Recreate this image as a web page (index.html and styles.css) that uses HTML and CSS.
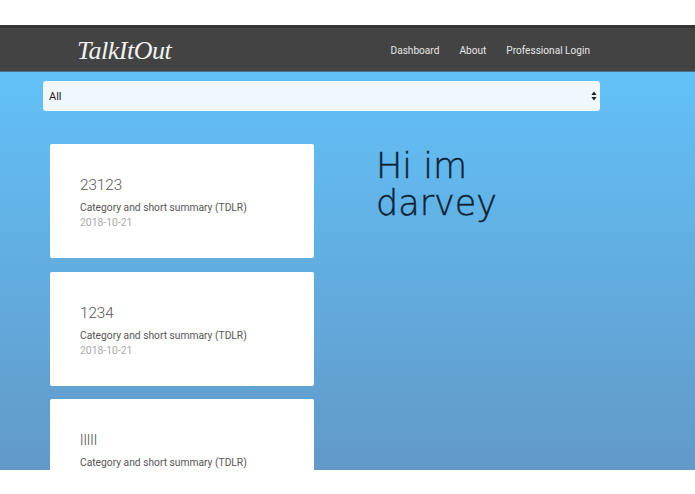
FILE: index.html
```html
<!DOCTYPE html>
<html lang="en">
<head>
<meta charset="utf-8">
<title>TalkItOut</title>
<link rel="stylesheet" href="styles.css">
</head>
<body>
<div class="app">
  <header class="nav">
    <a class="brand">TalkItOut</a>
    <nav class="links">
      <a>Dashboard</a>
      <a>About</a>
      <a>Professional Login</a>
    </nav>
  </header>
  <main class="main">
    <div class="select">
      <span>All</span>
      <svg class="arrows" width="6" height="10" viewBox="0 0 6 10"><path d="M3 0.5 5.6 4H0.4zM3 9.5 0.4 6H5.6z" fill="#1a1f24"/></svg>
    </div>
    <div class="content">
      <section class="cards">
        <article class="card">
          <h2>23123</h2>
          <p>Category and short summary (TDLR)</p>
          <time>2018-10-21</time>
        </article>
        <article class="card">
          <h2>1234</h2>
          <p>Category and short summary (TDLR)</p>
          <time>2018-10-21</time>
        </article>
        <article class="card">
          <h2>lllll</h2>
          <p>Category and short summary (TDLR)</p>
        </article>
      </section>
      <h1 class="greeting">Hi im<br>darvey</h1>
    </div>
  </main>
</div>
</body>
</html>
```
FILE: styles.css
```css
* { box-sizing: border-box; }
html, body { margin: 0; background: #fff; }
body { font-family: Roboto, "Liberation Sans", sans-serif; }
.app { height: 494px; padding: 25px 0 24px; display: flex; flex-direction: column; }
.nav {
  flex: 0 0 47px;
  display: flex;
  align-items: center;
  justify-content: space-between;
  padding: 0 105px 0 77px;
  background: #434343;
  border-top: 3px solid #363636;
  border-bottom: 1px solid #4f6f85;
}
.brand {
  font-family: "Liberation Serif", serif;
  font-style: italic;
  font-size: 26px;
  line-height: 30px;
  margin-top: 2px;
  color: #f2f2f2;
  letter-spacing: -0.5px;
}
.links { display: flex; gap: 20px; padding-top: 1px; font-size: 10.1px; color: #e6e6e6; }
.main {
  flex: 1;
  overflow: hidden;
  padding: 9px 95px 0 43px;
  background: linear-gradient(180deg, #62c1f7 0%, #6299c9 100%);
}
.select {
  height: 30px;
  display: flex;
  align-items: center;
  justify-content: space-between;
  padding: 0 3px 0 6px;
  background: #f0f8fd;
  border-radius: 3px;
  font-size: 11px;
  color: #1f2328;
}
.content { display: flex; margin-top: 33px; padding-left: 7px; }
.cards { flex: 0 0 264px; display: flex; flex-direction: column; gap: 13.5px; }
.card {
  flex: 0 0 114px;
  padding: 31px 30px 0;
  background: #fff;
  border-radius: 2px;
}
.card h2 { margin: 0; font-size: 15.2px; font-weight: 300; line-height: 20px; color: #555; }
.card p { margin: 5px 0 0; font-size: 10.25px; line-height: 15px; color: #555; }
.card time { display: block; font-size: 10.4px; line-height: 15px; color: #aaa; }
.greeting {
  margin: 4px 0 0 62px;
  font-family: "DejaVu Sans", sans-serif;
  font-size: 35px;
  font-weight: 200;
  line-height: 37px;
  color: #0c2233;
  -webkit-text-stroke: 0.4px #0c2233;
}
```
